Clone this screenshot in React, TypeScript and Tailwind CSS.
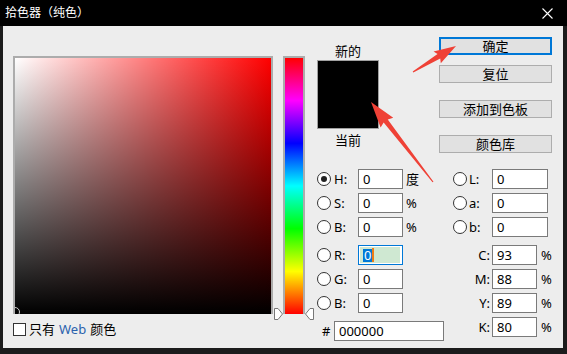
import React from "react";

type Pt = [number, number];

// polygon for a tapered annotation arrow from tail to tip
const arrowPoints = (tail: Pt, tip: Pt, head = 22, wing = 8) => {
  const dx = tip[0] - tail[0];
  const dy = tip[1] - tail[1];
  const len = Math.hypot(dx, dy);
  const ux = dx / len;
  const uy = dy / len;
  const nx = -uy;
  const ny = ux;
  const bx = tip[0] - ux * head;
  const by = tip[1] - uy * head;
  const p = (x: number, y: number, w: number): string => `${x + nx * w},${y + ny * w}`;
  return [
    p(tail[0], tail[1], 0.6),
    p(bx, by, 2.6),
    p(bx - ux * 2, by - uy * 2, wing),
    `${tip[0]},${tip[1]}`,
    p(bx - ux * 2, by - uy * 2, -wing),
    p(bx, by, -2.6),
    p(tail[0], tail[1], -0.6),
  ].join(" ");
};

const Radio = ({ checked = false }: { checked?: boolean }) => (
  <span className="flex h-[14px] w-[14px] shrink-0 items-center justify-center rounded-full border border-[#333] bg-white">
    {checked && <span className="h-[6px] w-[6px] rounded-full bg-[#222]" />}
  </span>
);

const Field = ({ value, w = 45 }: { value: string; w?: number }) => (
  <div
    className={`flex h-[20px] items-center border border-[#7a7a7a] bg-white pl-[4px] text-[13px] leading-none ${
      w === 56 ? "w-[56px]" : w === 110 ? "w-[110px]" : "w-[45px]"
    }`}
  >
    {value}
  </div>
);

const LeftRow = ({ label, value, unit, checked }: { label: string; value: string; unit?: string; checked?: boolean }) => (
  <div className="flex h-[20px] items-center">
    <Radio checked={checked} />
    <span className="ml-[3px] w-[24px] text-[13px] leading-none">{label}</span>
    <Field value={value} />
    {unit && <span className="ml-[3px] text-[13px] leading-none">{unit}</span>}
  </div>
);

const LabRow = ({ label, value }: { label: string; value: string }) => (
  <div className="flex h-[20px] items-center">
    <Radio />
    <span className="ml-[2px] w-[23px] text-[13px] leading-none">{label}</span>
    <Field value={value} w={56} />
  </div>
);

const CmykRow = ({ label, value }: { label: string; value: string }) => (
  <div className="flex h-[20px] items-center">
    <span className="w-[39px] pr-[2px] text-right text-[13px] leading-none">{label}</span>
    <Field value={value} />
    <span className="ml-[4px] text-[13px] leading-none">%</span>
  </div>
);

const Btn = ({ label, primary }: { label: string; primary?: boolean }) => (
  <div
    className={`flex h-[18px] w-[113px] items-center justify-center bg-[#e1e1e1] text-[13px] leading-none ${
      primary ? "border-2 border-[#0078d7]" : "border border-[#adadad]"
    }`}
  >
    {label}
  </div>
);

export default function App() {
  return (
    <div className="relative flex h-[354px] w-[567px] flex-col overflow-hidden bg-[#1c1c1c] font-['Noto_Sans','Noto_Sans_CJK_SC',sans-serif] text-black">
      {/* title bar */}
      <div className="flex h-[26px] shrink-0 items-center justify-between bg-black pl-[5px] pr-[14px] text-white">
        <span className="text-[12px] leading-none">拾色器（纯色）</span>
        <svg width="11" height="11" viewBox="0 0 11 11">
          <path d="M0.5 0.5 L10.5 10.5 M10.5 0.5 L0.5 10.5" stroke="#fff" strokeWidth="1.1" />
        </svg>
      </div>

      {/* body */}
      <div className="ml-[3px] flex h-[322px] w-[560px] bg-[#ededed] pl-[10px]">
        {/* colour field + hue */}
        <div className="flex flex-col pt-[30px]">
          <div className="flex">
            <div className="relative h-[258px] w-[260px] overflow-hidden border-x-2 border-t-2 border-[#acacac] bg-[linear-gradient(to_right,#fff,#f00)]">
              <div className="h-full w-full bg-[linear-gradient(to_bottom,rgba(0,0,0,0),#000)]" />
              <svg className="absolute bottom-[-5px] left-[-5px]" width="12" height="12" viewBox="0 0 12 12">
                <circle cx="5" cy="5" r="4.5" fill="none" stroke="#d0d0d0" strokeWidth="1" />
              </svg>
            </div>
            <div className="relative ml-[10px] h-[258px] w-[22px] border-x-2 border-t-2 border-[#acacac] bg-[linear-gradient(to_bottom,#f00,#f0f,#00f,#0ff,#0f0,#ff0,#f00)]">
              <svg className="absolute bottom-[-6px] left-[-11px]" width="9" height="12" viewBox="0 0 9 12">
                <path d="M0.5 0.5 H4 L8.5 6 L4 11.5 H0.5 Z" fill="#fff" stroke="#777" />
              </svg>
              <svg className="absolute bottom-[-6px] right-[-11px]" width="9" height="12" viewBox="0 0 9 12">
                <path d="M8.5 0.5 H5 L0.5 6 L5 11.5 H8.5 Z" fill="#fff" stroke="#777" />
              </svg>
            </div>
          </div>
          <div className="mt-[9px] flex items-center text-[13px] leading-none">
            <span className="h-[13px] w-[13px] border border-[#333] bg-white" />
            <span className="ml-[3px]">只有 </span>
            <span className="mx-[4px] text-[#2a62ad]">Web</span>
            <span>颜色</span>
          </div>
        </div>

        {/* right side */}
        <div className="ml-[12px] flex flex-col pt-[11px]">
          <div className="flex">
            <div className="flex w-[62px] flex-col items-center">
              <span className="mt-[7px] h-[14px] text-[13px] leading-[14px]">新的</span>
              <div className="mt-[2px] h-[69px] w-[62px] border border-[#a0a0a0] bg-black" />
              <span className="mt-[4px] h-[14px] text-[13px] leading-[14px]">当前</span>
            </div>
            <div className="ml-[60px] flex flex-col">
              <Btn label="确定" primary />
              <div className="mt-[10px]">
                <Btn label="复位" />
              </div>
              <div className="mt-[17px]">
                <Btn label="添加到色板" />
              </div>
              <div className="mt-[17px]">
                <Btn label="颜色库" />
              </div>
            </div>
          </div>

          <div className="mt-[16px] flex">
            <div className="flex w-[136px] flex-col gap-[4px]">
              <LeftRow label="H:" value="0" unit="度" checked />
              <LeftRow label="S:" value="0" unit="%" />
              <LeftRow label="B:" value="0" unit="%" />
              <div className="mt-[4px] flex h-[20px] items-center">
                <Radio />
                <span className="ml-[3px] w-[24px] text-[13px] leading-none">R:</span>
                <div className="flex h-[20px] w-[45px] border border-[#0078d7] bg-white p-[1px]">
                  <div className="flex h-full w-[40px] items-center bg-[#cfe8d2] pl-[3px] text-[13px] leading-none">
                    <span className="bg-[#0078d7] px-[1px] text-white">0</span>
                    <span className="h-[14px] w-[2px] bg-[#f07d16]" />
                  </div>
                </div>
              </div>
              <LeftRow label="G:" value="0" />
              <LeftRow label="B:" value="0" />
              <div className="mt-[4px] flex h-[20px] items-center">
                <span className="ml-[5px] w-[12px] text-[13px] leading-none">#</span>
                <Field value="000000" w={110} />
              </div>
            </div>
            <div className="flex flex-col gap-[4px]">
              <LabRow label="L:" value="0" />
              <LabRow label="a:" value="0" />
              <LabRow label="b:" value="0" />
              <div className="mt-[4px] flex flex-col gap-[4px]">
                <CmykRow label="C:" value="93" />
                <CmykRow label="M:" value="88" />
                <CmykRow label="Y:" value="89" />
                <CmykRow label="K:" value="80" />
              </div>
            </div>
          </div>
        </div>
      </div>

      {/* annotation arrows */}
      <svg className="pointer-events-none absolute inset-0" width="567" height="354">
        <polygon points={arrowPoints([413, 72], [456, 46], 20, 7)} fill="#ef4136" />
        <polygon points={arrowPoints([433, 182], [371, 102], 24, 8)} fill="#ef4136" />
      </svg>
    </div>
  );
}
